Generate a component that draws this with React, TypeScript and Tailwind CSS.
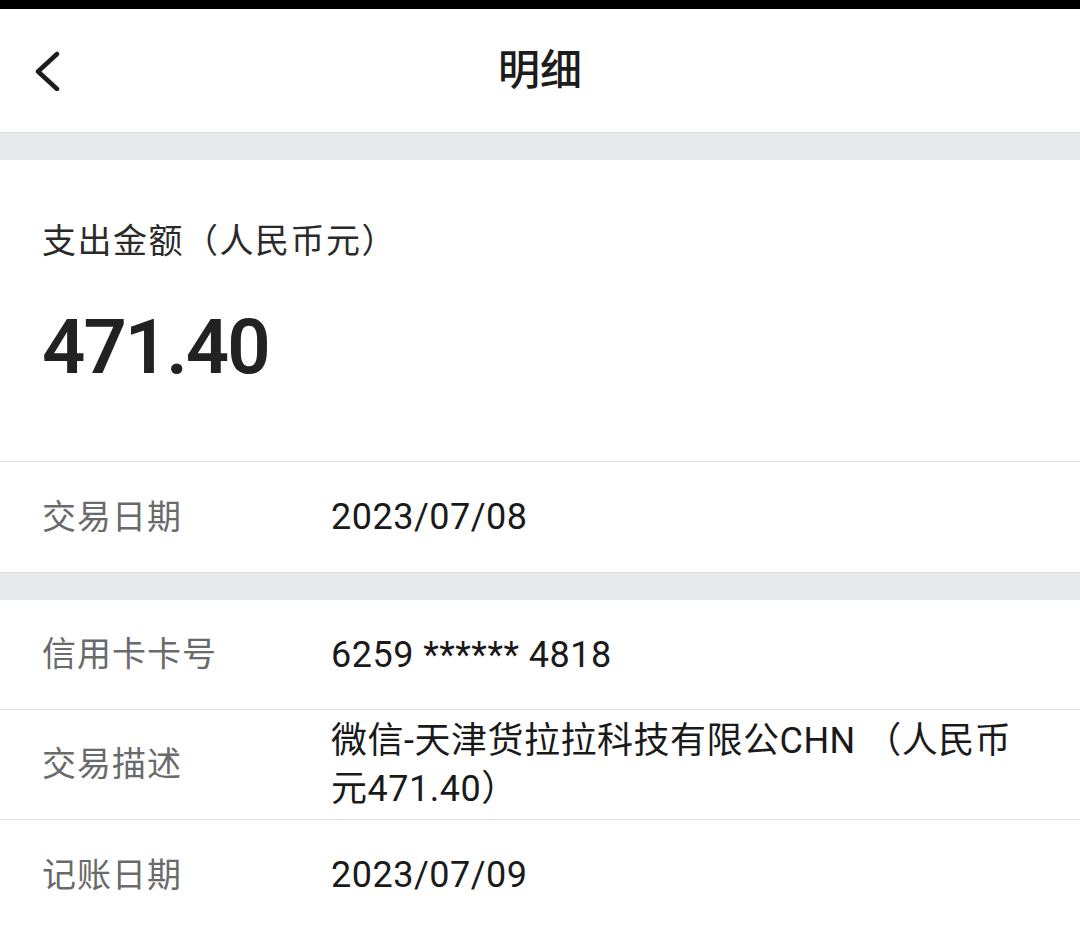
import { ReactNode } from 'react';

const FONT = "font-['Roboto','Noto_Sans_CJK_SC',sans-serif]";

function Row({ label, children, last }: { label: string; children: ReactNode; last?: boolean }) {
    return (
        <div className={`flex min-h-[110px] items-center pl-[42px] pr-[50px] ${last ? '' : 'border-b border-[#e2e2e4]'}`}>
            <div className="w-[289px] shrink-0 text-[34px] text-[#6a6a6a] tracking-[1px]">{label}</div>
            <div className="flex-1 text-[36px] leading-[48px] text-[#1a1a1a] tracking-[0.5px]">{children}</div>
        </div>
    );
}

export default function App() {
    return (
        <div className={`w-[1080px] h-[928px] overflow-hidden bg-white ${FONT}`}>
            {/* status bar */}
            <div className="h-[9px] bg-black" />

            {/* header */}
            <div className="relative flex h-[124px] items-center justify-center border-b border-[#dcdcdf]">
                <svg className="absolute left-[33px] top-[42px]" width="28" height="40" viewBox="0 0 28 40" fill="none">
                    <path d="M24 3 L5 20.5 L24 38" stroke="#1c1c1c" strokeWidth="4.5" strokeLinecap="round" strokeLinejoin="round" />
                </svg>
                <h1 className="text-[42px] font-medium text-[#1c1c1c]">明细</h1>
            </div>
            <div className="h-[27px] bg-[#e8e9ec]" />

            {/* amount */}
            <div className="px-[42px] pt-[57px] pb-[74px] border-b border-[#e2e2e4]">
                <div className="text-[34px] leading-[48px] text-[#2a2a2a] tracking-[1.5px]">支出金额（人民币元）</div>
                <div className="mt-[42px] text-[76px] leading-[80px] font-semibold text-[#222] tracking-[-2px]">471.40</div>
            </div>

            <Row label="交易日期" last>2023/07/08</Row>
            <div className="h-[28px] bg-[#e8e9ec] border-t border-[#dcdcdf]" />

            <Row label="信用卡卡号">6259 ****** 4818</Row>
            <Row label="交易描述">微信-天津货拉拉科技有限公CHN （人民币元471.40）</Row>
            <Row label="记账日期" last>2023/07/09</Row>
        </div>
    );
}
